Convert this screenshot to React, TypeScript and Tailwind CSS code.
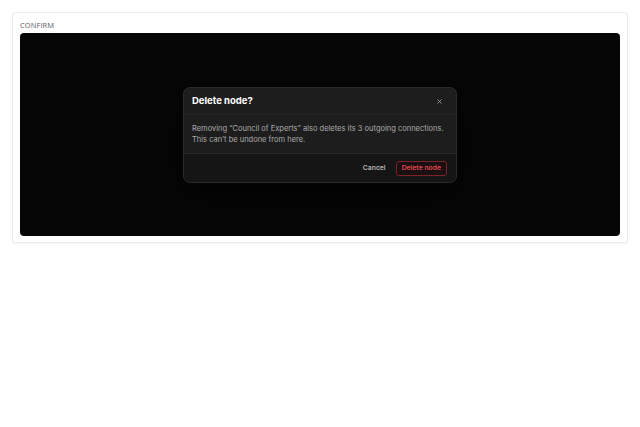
import { X } from "lucide-react";

export default function App() {
  return (
    <div className="w-[640px] h-[427px] bg-white p-3 pt-3" style={{ fontFamily: "Inter, 'Liberation Sans', sans-serif" }}>
      <div className="border border-[#ececec] rounded-[3px] bg-white px-[7px] pt-[7px] pb-[6px] shadow-[0_1px_2px_rgba(0,0,0,0.04)]">
        <div className="text-[7.5px] tracking-[0.01em] text-[#5e5e5e] leading-[10px] mb-[3px]" style={{ fontFamily: "'Open Sans', 'Noto Sans', sans-serif" }}>
          CONFIRM
        </div>
        <div className="h-[203px] rounded-[4px] bg-[#060606] flex items-start justify-center pt-[54px]">
          <div className="w-[274px] rounded-[7px] bg-[#1d1d1d] border border-[#2a2a2a] shadow-[0_10px_30px_rgba(0,0,0,0.6)] overflow-hidden">
            <div className="h-[27px] flex items-center justify-between pl-[8px] pr-[13px] border-b border-[#262626]">
              <span className="text-[9.5px] font-bold text-white">Delete node?</span>
              <X className="w-[7px] h-[7px] text-[#9a9a9a]" strokeWidth={3} />
            </div>
            <div className="px-[8px] pt-[8px] pb-[8px] text-[7.5px] leading-[11px] text-[#ababab]">
              <p>Removing “Council of Experts” also deletes its 3 outgoing connections.</p>
              <p>This can’t be undone from here.</p>
            </div>
            <div className="h-[29px] bg-[#151515] border-t border-[#2a2a2a] flex items-center justify-end gap-[7px] pr-[9px]">
              <button className="text-[6.8px] font-semibold text-[#b5b5b5] px-[3px]">Cancel</button>
              <button className="h-[15px] px-[5px] rounded-[3px] border border-[#7a2226] text-[6.8px] font-semibold text-[#e0474d] bg-[#1a1011]">
                Delete node
              </button>
            </div>
          </div>
        </div>
      </div>
    </div>
  );
}
